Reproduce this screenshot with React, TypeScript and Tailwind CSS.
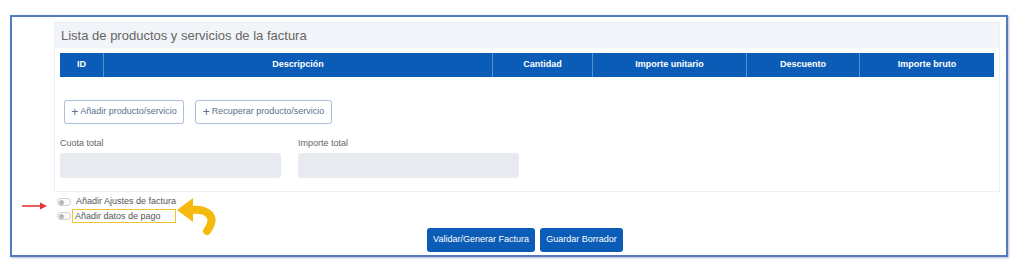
import React from 'react';

const columns = [
  { label: 'ID', width: 'w-[43px]' },
  { label: 'Descripción', width: 'w-[389px]' },
  { label: 'Cantidad', width: 'w-[100px]' },
  { label: 'Importe unitario', width: 'w-[154px]' },
  { label: 'Descuento', width: 'w-[113px]' },
  { label: 'Importe bruto', width: 'flex-1' },
];

const Toggle: React.FC = () => (
  <span className="inline-flex items-center w-[14px] h-[8px] rounded-full border border-[#c9ccd1] bg-white px-[1px]">
    <span className="w-[5px] h-[5px] rounded-full bg-[#b5b8bd]" />
  </span>
);

const App: React.FC = () => {
  return (
    <div className="w-[1024px] h-[264px] bg-white pt-[15px] pl-[10px] font-['Liberation_Sans',Arial,sans-serif]">
      <div className="relative w-[998px] h-[242px] border-2 border-[#5479bd] shadow-[1px_1px_2px_rgba(60,90,150,0.4)] pl-[42px] pr-[6px] pt-[5px]">
        {/* product panel */}
        <div className="w-[946px] h-[170px] border border-[#eceff3]">
          <div className="h-[25px] bg-[#f1f4f8] px-[6px] text-[13px] leading-[25px] text-[#666]">
            Lista de productos y servicios de la factura
          </div>
          <div className="px-[5px] pt-[5px]">
            <div className="flex h-[24px] bg-[#0b5cb6] text-white text-[9px] font-bold">
              {columns.map((c, i) => (
                <div
                  key={c.label}
                  className={`${c.width} flex items-center justify-center ${i > 0 ? 'border-l border-[#5a8fd0]' : ''}`}
                >
                  {c.label}
                </div>
              ))}
            </div>
            <div className="flex gap-[11px] pl-[4px] mt-[23px]">
              <button className="h-[24px] w-[120px] rounded-[3px] border border-[#a9bfdc] bg-white text-[9px] text-[#5a6f8e] flex items-center justify-center">
                <span className="text-[12px] mr-[2px] leading-none">+</span>Añadir producto/servicio
              </button>
              <button className="h-[24px] w-[137px] rounded-[3px] border border-[#a9bfdc] bg-white text-[9px] text-[#5a6f8e] flex items-center justify-center">
                <span className="text-[12px] mr-[2px] leading-none">+</span>Recuperar producto/servicio
              </button>
            </div>
            <div className="flex gap-[17px] mt-[13px]">
              <div className="w-[221px]">
                <div className="text-[9px] text-[#666] h-[16px]">Cuota total</div>
                <div className="h-[25px] rounded-[3px] bg-[#e7eaee]" />
              </div>
              <div className="w-[221px]">
                <div className="text-[9px] text-[#666] h-[16px]">Importe total</div>
                <div className="h-[25px] rounded-[3px] bg-[#e7eaee]" />
              </div>
            </div>
          </div>
        </div>

        {/* toggles */}
        <div className="mt-[5px] pl-[3px] flex flex-col gap-[4px] text-[9px] text-[#555]">
          <div className="flex items-center gap-[5px] h-[10px]">
            <Toggle />
            <span>Añadir Ajustes de factura</span>
          </div>
          <div className="flex items-center gap-[1px] h-[10px]">
            <Toggle />
            <span className="border border-[#f2c230] pl-[2px] pr-[14px] leading-[12px]">Añadir datos de pago</span>
          </div>
        </div>

        {/* action buttons */}
        <div className="flex gap-[5px] pl-[373px] mt-[7px]">
          <button className="h-[24px] w-[108px] rounded-[3px] bg-[#0b5cb6] text-white text-[9px]">
            Validar/Generar Factura
          </button>
          <button className="h-[24px] w-[83px] rounded-[3px] bg-[#0b5cb6] text-white text-[9px]">
            Guardar Borrador
          </button>
        </div>

        {/* annotation: red arrow */}
        <svg className="absolute left-[10px] top-[185px]" width="25" height="8" viewBox="0 0 25 8">
          <line x1="0" y1="4" x2="19" y2="4" stroke="#e53935" strokeWidth="1.6" />
          <polygon points="18,0.5 25,4 18,7.5" fill="#e53935" />
        </svg>

        {/* annotation: yellow curved arrow */}
        <svg className="absolute left-[165px] top-[179px]" width="44" height="40" viewBox="0 0 44 40">
          <path d="M13 14 C 30 12, 41 20, 30 35" fill="none" stroke="#f6b90f" strokeWidth="8" strokeLinecap="round" />
          <polygon points="0,14 16,2 16,26" fill="#f6b90f" />
        </svg>
      </div>
    </div>
  );
};

export default App;
